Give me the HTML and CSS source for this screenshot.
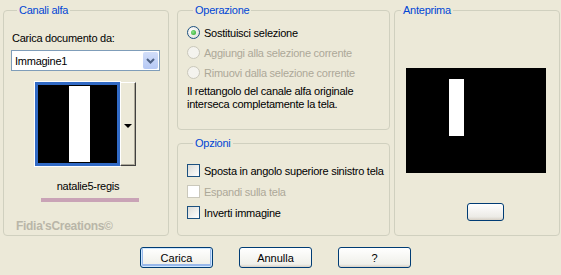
FILE: index.html
```html
<!DOCTYPE html>
<html lang="it">
  <head>
    <meta charset="UTF-8" />
    <title>Canali alfa</title>
    <link rel="stylesheet" href="styles.css">
  </head>
  <body>
    <div class="dialog">
      <div class="groups">
        <div class="group group-left">
          <span class="group-title">Canali alfa</span>
          <div class="label">Carica documento da:</div>
          <div class="combo">
            <span class="combo-text">Immagine1</span>
            <span class="combo-btn">
              <svg width="9" height="6" viewBox="0 0 9 6"><path d="M1 1 L4.5 4.5 L8 1" fill="none" stroke="#4d6185" stroke-width="2"/></svg>
            </span>
          </div>
          <div class="thumb-row">
            <div class="thumb"><div class="thumb-bar"></div></div>
            <div class="thumb-btn"><span class="tri"></span></div>
          </div>
          <div class="thumb-name">natalie5-regis</div>
          <div class="pink-line"></div>
          <div class="watermark">Fidia'sCreations©</div>
        </div>

        <div class="middle">
          <div class="group group-op">
            <span class="group-title">Operazione</span>
            <div class="opt"><span class="radio checked"></span>Sostituisci selezione</div>
            <div class="opt disabled"><span class="radio"></span>Aggiungi alla selezione corrente</div>
            <div class="opt disabled"><span class="radio"></span>Rimuovi dalla selezione corrente</div>
            <div class="note">Il rettangolo del canale alfa originale<br>interseca completamente la tela.</div>
          </div>
          <div class="group group-opz">
            <span class="group-title">Opzioni</span>
            <div class="opt"><span class="check"></span>Sposta in angolo superiore sinistro tela</div>
            <div class="opt disabled"><span class="check"></span>Espandi sulla tela</div>
            <div class="opt"><span class="check"></span>Inverti immagine</div>
          </div>
        </div>

        <div class="group group-right">
          <span class="group-title">Anteprima</span>
          <div class="preview"><div class="preview-bar"></div></div>
          <div class="small-btn"></div>
        </div>
      </div>

      <div class="buttons">
        <button class="btn default">Carica</button>
        <button class="btn">Annulla</button>
        <button class="btn">?</button>
      </div>
    </div>
  </body>
</html>
```

FILE: styles.css
```css
body {
  margin: 0;
  background: #ece9d8;
  font-family: "Liberation Sans", Arial, sans-serif;
  font-size: 11px;
  letter-spacing: -0.25px;
  color: #000;
}

.dialog {
  width: 561px;
  height: 275px;
  padding: 10px 0 0 3px;
  box-sizing: border-box;
}

.groups {
  display: flex;
  align-items: flex-start;
}

.group {
  border: 1px solid #d0d0bf;
  border-radius: 4px;
  display: flex;
  flex-direction: column;
  box-sizing: border-box;
}

.group-title {
  align-self: flex-start;
  margin: -7px 0 0 6px;
  padding: 0 2px;
  line-height: 13px;
  background: #ece9d8;
  color: #0046d5;
}

/* left column */
.group-left {
  width: 166px;
  height: 226px;
  padding: 0 7px 0 7px;
}

.label {
  margin: 15px 0 0 1px;
  line-height: 13px;
}

.combo {
  display: flex;
  align-items: center;
  width: 149px;
  height: 21px;
  margin: 5px 0 0 0;
  border: 1px solid #7f9db9;
  background: #fff;
  box-sizing: border-box;
}

.combo-text {
  flex: 1;
  padding-left: 3px;
}

.combo-btn {
  width: 15px;
  height: 17px;
  margin-right: 1px;
  background: linear-gradient(#d2def9, #b6c9f5);
  border-radius: 2px;
  display: flex;
  align-items: center;
  justify-content: center;
}

.thumb-row {
  display: flex;
  margin: 11px 0 0 24px;
  height: 84px;
}

.thumb {
  width: 85px;
  height: 84px;
  border: 3px solid #316ac5;
  outline: 1px solid #fff;
  background: #000;
  box-sizing: border-box;
  display: flex;
  justify-content: center;
}

.thumb-bar {
  width: 21px;
  margin: 1px 0 1px 3px;
  background: #fff;
}

.thumb-btn {
  width: 16px;
  height: 84px;
  box-sizing: border-box;
  border-left: 1px solid #fff;
  border-top: 1px solid #fff;
  border-right: 1px solid #404040;
  border-bottom: 1px solid #404040;
  box-shadow: inset -1px -1px 0 #aca899;
  display: flex;
  align-items: center;
  justify-content: center;
}

.tri {
  width: 0;
  height: 0;
  border-left: 4px solid transparent;
  border-right: 4px solid transparent;
  border-top: 4px solid #000;
  margin-top: 4px;
}

.thumb-name {
  text-align: center;
  margin: 14px 0 0 0;
  padding-left: 4px;
  line-height: 13px;
}

.pink-line {
  width: 98px;
  height: 4px;
  margin: 5px 0 0 30px;
  background: #c9a3b6;
}

.watermark {
  margin: 18px 0 0 5px;
  color: #b9b6a8;
  font-size: 12px;
  font-weight: bold;
  letter-spacing: -0.3px;
  line-height: 13px;
}

/* middle column */
.middle {
  margin-left: 8px;
  width: 213px;
  display: flex;
  flex-direction: column;
}

.group-op {
  height: 120px;
  padding: 0 0 0 9px;
}

.group-opz {
  margin-top: 13px;
  height: 93px;
  padding: 0 0 0 9px;
}

.opt {
  display: flex;
  align-items: center;
  height: 13px;
  margin-top: 7px;
  white-space: nowrap;
}

.group-op .opt:first-of-type {
  margin-top: 9px;
}

.group-opz .opt {
  margin-top: 8px;
}

.group-opz .opt:first-of-type {
  margin-top: 14px;
}

.opt.disabled {
  color: #aca899;
}

.radio {
  width: 13px;
  height: 13px;
  border-radius: 50%;
  border: 1px solid #1c5180;
  background: radial-gradient(circle at 35% 35%, #fff, #dcdcd4);
  box-sizing: border-box;
  margin-right: 4px;
  display: flex;
  align-items: center;
  justify-content: center;
}

.radio.checked::after {
  content: "";
  width: 5px;
  height: 5px;
  border-radius: 50%;
  background: radial-gradient(circle at 40% 40%, #8ee58b, #21a121);
}

.disabled .radio {
  border-color: #cac8bb;
  background: #f4f3ee;
}

.check {
  width: 13px;
  height: 13px;
  border: 1px solid #1c5180;
  background: linear-gradient(135deg, #dcdcd7, #fff);
  box-sizing: border-box;
  margin-right: 4px;
}

.disabled .check {
  border-color: #cac8bb;
  background: #fff;
}

.note {
  margin-top: 6px;
  line-height: 13px;
}

/* right column */
.group-right {
  margin-left: 4px;
  width: 166px;
  height: 226px;
}

.preview {
  width: 140px;
  height: 105px;
  margin: 51px 0 0 11px;
  background: #000;
}

.preview-bar {
  width: 15px;
  height: 57px;
  margin: 11px 0 0 43px;
  background: #fff;
}

.small-btn {
  width: 37px;
  height: 18px;
  margin: 30px 0 0 72px;
  border: 1px solid #003c74;
  border-radius: 3px;
  background: linear-gradient(#fff, #ecebe6 80%, #d6d0c5);
  box-sizing: border-box;
}

/* bottom buttons */
.buttons {
  display: flex;
  gap: 26px;
  margin: 11px 0 0 137px;
}

.btn {
  width: 73px;
  height: 21px;
  border: 1px solid #003c74;
  border-radius: 3px;
  background: linear-gradient(#fff, #f0f0ea 85%, #d6d0c5);
  font-family: "Liberation Sans", Arial, sans-serif;
  font-size: 11px;
  color: #000;
  padding: 0;
}

.btn.default {
  box-shadow: inset 0 0 0 1px #cee7ff, inset 0 -1px 0 2px #98b8ea;
}
```
